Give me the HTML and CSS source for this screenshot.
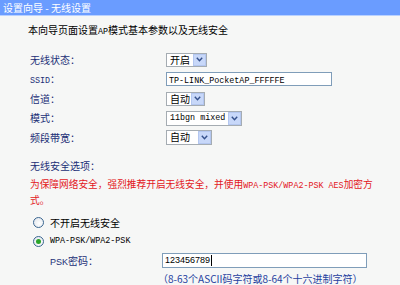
FILE: index.html
```html
<!DOCTYPE html>
<html lang="zh-CN">
<head>
<meta charset="utf-8">
<title>设置向导 - 无线设置</title>
<link rel="stylesheet" href="styles.css">
</head>
<body>
<div class="titlebar">设置向导 - 无线设置</div>
<div class="content">
  <p class="intro">本向导页面设置<span class="mono">AP</span>模式基本参数以及无线安全</p>
  <div class="form">
    <div class="label">无线状态：</div>
    <div class="field"><div class="select sel-status"><span class="val">开启</span><span class="arrow"><svg width="7" height="5" viewBox="0 0 7 5"><polyline points="0.8,0.8 3.5,3.8 6.2,0.8" fill="none" stroke="#34508a" stroke-width="1.4"/></svg></span></div></div>
    <div class="label"><span class="mono">SSID</span>：</div>
    <div class="field"><div class="textbox ssid"><span class="mono">TP-LINK_PocketAP_FFFFFE</span></div></div>
    <div class="label">信道：</div>
    <div class="field"><div class="select sel-channel"><span class="val">自动</span><span class="arrow"><svg width="7" height="5" viewBox="0 0 7 5"><polyline points="0.8,0.8 3.5,3.8 6.2,0.8" fill="none" stroke="#34508a" stroke-width="1.4"/></svg></span></div></div>
    <div class="label">模式：</div>
    <div class="field"><div class="select sel-mode"><span class="val mono">11bgn mixed</span><span class="arrow"><svg width="7" height="5" viewBox="0 0 7 5"><polyline points="0.8,0.8 3.5,3.8 6.2,0.8" fill="none" stroke="#34508a" stroke-width="1.4"/></svg></span></div></div>
    <div class="label">频段带宽：</div>
    <div class="field"><div class="select sel-bw"><span class="val">自动</span><span class="arrow"><svg width="7" height="5" viewBox="0 0 7 5"><polyline points="0.8,0.8 3.5,3.8 6.2,0.8" fill="none" stroke="#34508a" stroke-width="1.4"/></svg></span></div></div>
  </div>
  <div class="sec-title">无线安全选项：</div>
  <p class="warn">为保障网络安全，强烈推荐开启无线安全，并使用<span class="mono">WPA-PSK/WPA2-PSK AES</span>加密方式。</p>
  <div class="opt first"><span class="radio"></span><span>不开启无线安全</span></div>
  <div class="opt"><span class="radio checked"></span><span class="mono">WPA-PSK/WPA2-PSK</span></div>
  <div class="psk">
    <div class="psk-label"><span class="psk-en">PSK</span>密码：</div>
    <div class="pwd"><span>123456789</span><span class="caret"></span></div>
    <div class="hint">（8-63个ASCII码字符或8-64个十六进制字符）</div>
  </div>
</div>
</body>
</html>
```
FILE: styles.css
```css
* { box-sizing: border-box; }
body {
  margin: 0;
  width: 400px;
  height: 285px;
  overflow: hidden;
  background: #f6f7f6;
  font-family: "Noto Sans CJK SC", sans-serif;
  font-size: 10px;
  color: #000;
  text-spacing-trim: space-all;
}
.titlebar {
  height: 16px;
  background: #6a9cff;
  border-bottom: 1px solid #b9d1ff;
  color: #fff;
  line-height: 15px;
  padding-left: 3px;
  font-size: 10px;
}
.content { padding-left: 30px; }
.intro {
  margin: 6px 0 0 -2px;
  line-height: 16px;
  font-size: 10px;
}
.mono {
  font-family: "Liberation Mono", monospace;
  font-size: 8.4px;
  line-height: 1;
}
.form {
  margin-top: 12px;
  display: grid;
  grid-template-columns: 136px auto;
  grid-auto-rows: 19.5px;
  align-items: center;
}
.label { color: #1b2f76; line-height: 14px; }
.field { display: flex; align-items: center; }
.select {
  display: flex;
  height: 14px;
  border: 1px solid #a5acb2;
  background: #fff;
}
.select .val {
  flex: 1;
  padding-left: 3px;
  line-height: 12px;
  white-space: nowrap;
}
.arrow {
  width: 13px;
  background: #c8d8f9;
  border: 1px solid #b4c7f0;
  display: flex;
  align-items: center;
  justify-content: center;
}
.sel-status { width: 41px; }
.sel-channel { width: 39px; }
.sel-mode { width: 76px; height: 15px; }
.sel-bw { width: 46px; height: 15px; }
.textbox {
  height: 14px;
  border: 1px solid #7f9db9;
  background: #fff;
  padding-left: 2px;
  line-height: 12px;
}
.ssid { width: 166px; }
.sec-title {
  margin-top: 10px;
  line-height: 16px;
  color: #1b2f76;
}
.warn {
  margin: 2px 0 0 0;
  width: 348px;
  line-height: 16.5px;
  font-size: 9.7px;
  color: #e3161c;
}
.opt {
  height: 19px;
  display: flex;
  align-items: center;
  gap: 6px;
  padding-left: 3px;
}
.opt.first { margin-top: 4px; }
.radio {
  width: 11px;
  height: 11px;
  border: 1px solid #3a6690;
  border-radius: 50%;
  background: radial-gradient(circle at 60% 60%, #ffffff, #dde3ea);
  display: flex;
  align-items: center;
  justify-content: center;
}
.radio.checked::after {
  content: "";
  width: 5px;
  height: 5px;
  border-radius: 50%;
  background: #2aa52a;
}
.psk {
  display: grid;
  grid-template-columns: 112px auto;
  grid-auto-rows: 19px;
  align-items: center;
  padding-left: 20px;
}
.psk-label { color: #1b2f76; }
.psk-en { font-family: "Liberation Sans", sans-serif; font-size: 9px; }
.pwd {
  width: 205px;
  height: 15px;
  border: 1px solid #7f9db9;
  background: #fff;
  display: flex;
  align-items: center;
  padding-left: 2px;
  font-family: "Liberation Sans", sans-serif;
  font-size: 9px;
}
.caret {
  width: 1px;
  height: 11px;
  background: #000;
  margin-left: 1px;
}
.hint {
  grid-column: 2;
  margin-left: -4px;
  color: #1f3f9f;
  white-space: nowrap;
  line-height: 14px;
}
```
